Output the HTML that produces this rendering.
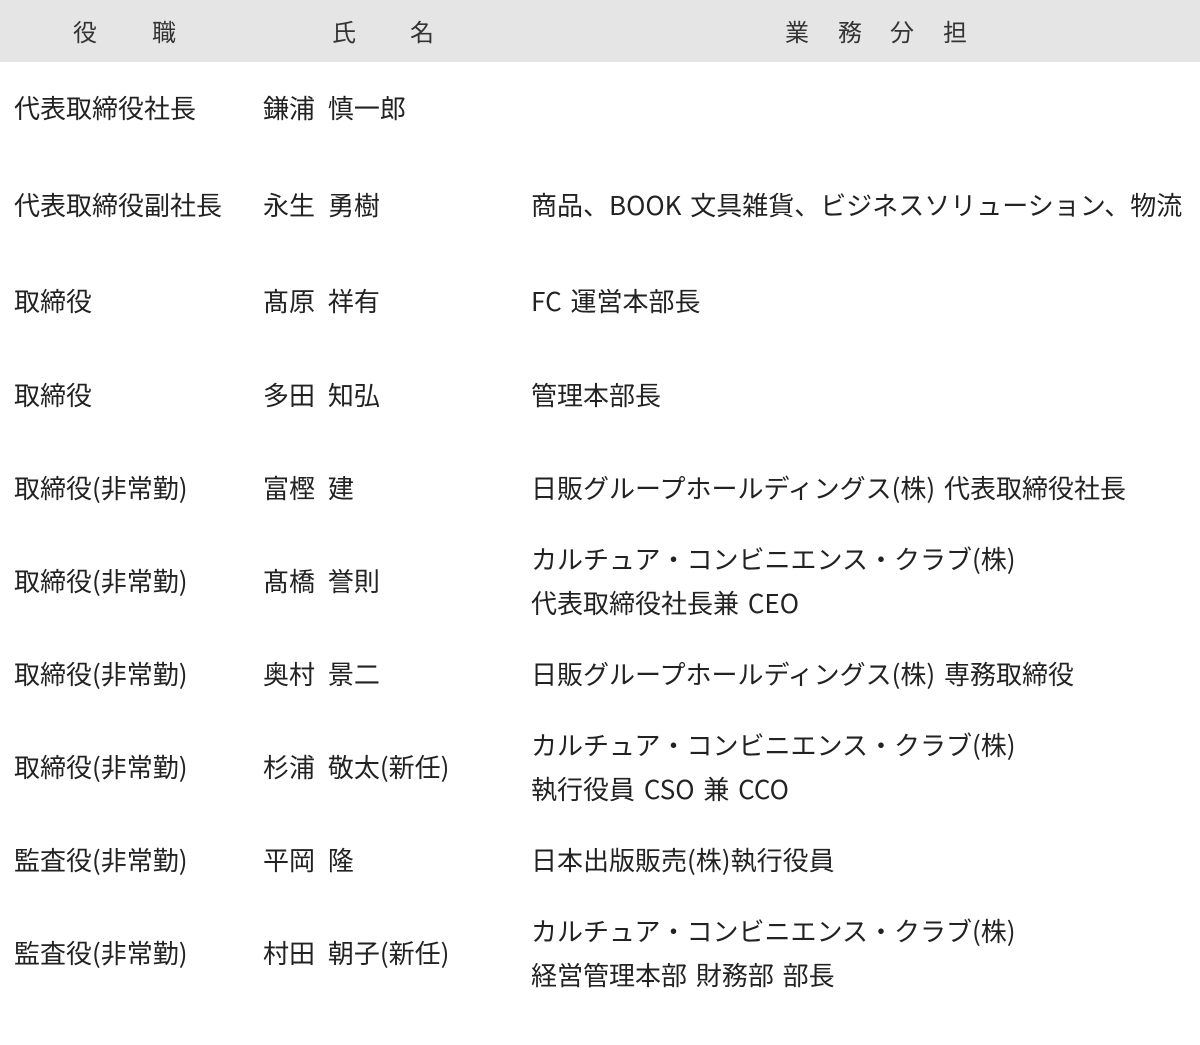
<!DOCTYPE html>
<html><head><meta charset="utf-8"><style>
body{margin:0;width:1200px;height:1045px;background:#fff;position:relative;overflow:hidden;font-family:"Noto Sans CJK JP","Liberation Sans",sans-serif;color:#222;font-size:26px;word-spacing:7px}
.h{position:absolute;left:0;top:0;width:1200px;height:62px;background:#e6e5e5}
.t{position:absolute;white-space:nowrap;line-height:44px;transform:translateY(-22px)}
.c{word-spacing:3px}
.t2{transform:translateY(-44px)}
.hd{position:absolute;top:31px;transform:translateY(-50%);font-size:24px;color:#333;line-height:30px}
</style></head><body>
<div class="h"></div>
<div class="hd" style="left:73px">役</div><div class="hd" style="left:152px">職</div>
<div class="hd" style="left:332px">氏</div><div class="hd" style="left:410px">名</div>
<div class="hd" style="left:785px">業</div><div class="hd" style="left:838px">務</div><div class="hd" style="left:890px">分</div><div class="hd" style="left:943px">担</div>

<div class="t" style="left:14px;top:108px">代表取締役社長</div><div class="t" style="left:263px;top:108px">鎌浦 慎一郎</div>
<div class="t" style="left:14px;top:205px">代表取締役副社長</div><div class="t" style="left:263px;top:205px">永生 勇樹</div><div class="t c" style="left:531px;top:205px">商品、BOOK 文具雑貨、ビジネスソリューション、物流</div>
<div class="t" style="left:14px;top:301px">取締役</div><div class="t" style="left:263px;top:301px">髙原 祥有</div><div class="t c" style="left:531px;top:301px">FC 運営本部長</div>
<div class="t" style="left:14px;top:395px">取締役</div><div class="t" style="left:263px;top:395px">多田 知弘</div><div class="t c" style="left:531px;top:395px">管理本部長</div>
<div class="t" style="left:14px;top:488px">取締役(非常勤)</div><div class="t" style="left:263px;top:488px">富樫 建</div><div class="t c" style="left:531px;top:488px">日販グループホールディングス(株) 代表取締役社長</div>
<div class="t" style="left:14px;top:581px">取締役(非常勤)</div><div class="t" style="left:263px;top:581px">髙橋 誉則</div><div class="t t2 c" style="left:531px;top:581px">カルチュア・コンビニエンス・クラブ(株)<br>代表取締役社長兼 CEO</div>
<div class="t" style="left:14px;top:674px">取締役(非常勤)</div><div class="t" style="left:263px;top:674px">奥村 景二</div><div class="t c" style="left:531px;top:674px">日販グループホールディングス(株) 専務取締役</div>
<div class="t" style="left:14px;top:767px">取締役(非常勤)</div><div class="t" style="left:263px;top:767px">杉浦 敬太(新任)</div><div class="t t2 c" style="left:531px;top:767px">カルチュア・コンビニエンス・クラブ(株)<br>執行役員 CSO 兼 CCO</div>
<div class="t" style="left:14px;top:860px">監査役(非常勤)</div><div class="t" style="left:263px;top:860px">平岡 隆</div><div class="t c" style="left:531px;top:860px">日本出版販売(株)執行役員</div>
<div class="t" style="left:14px;top:953px">監査役(非常勤)</div><div class="t" style="left:263px;top:953px">村田 朝子(新任)</div><div class="t t2 c" style="left:531px;top:953px">カルチュア・コンビニエンス・クラブ(株)<br>経営管理本部 財務部 部長</div>
</body></html>
